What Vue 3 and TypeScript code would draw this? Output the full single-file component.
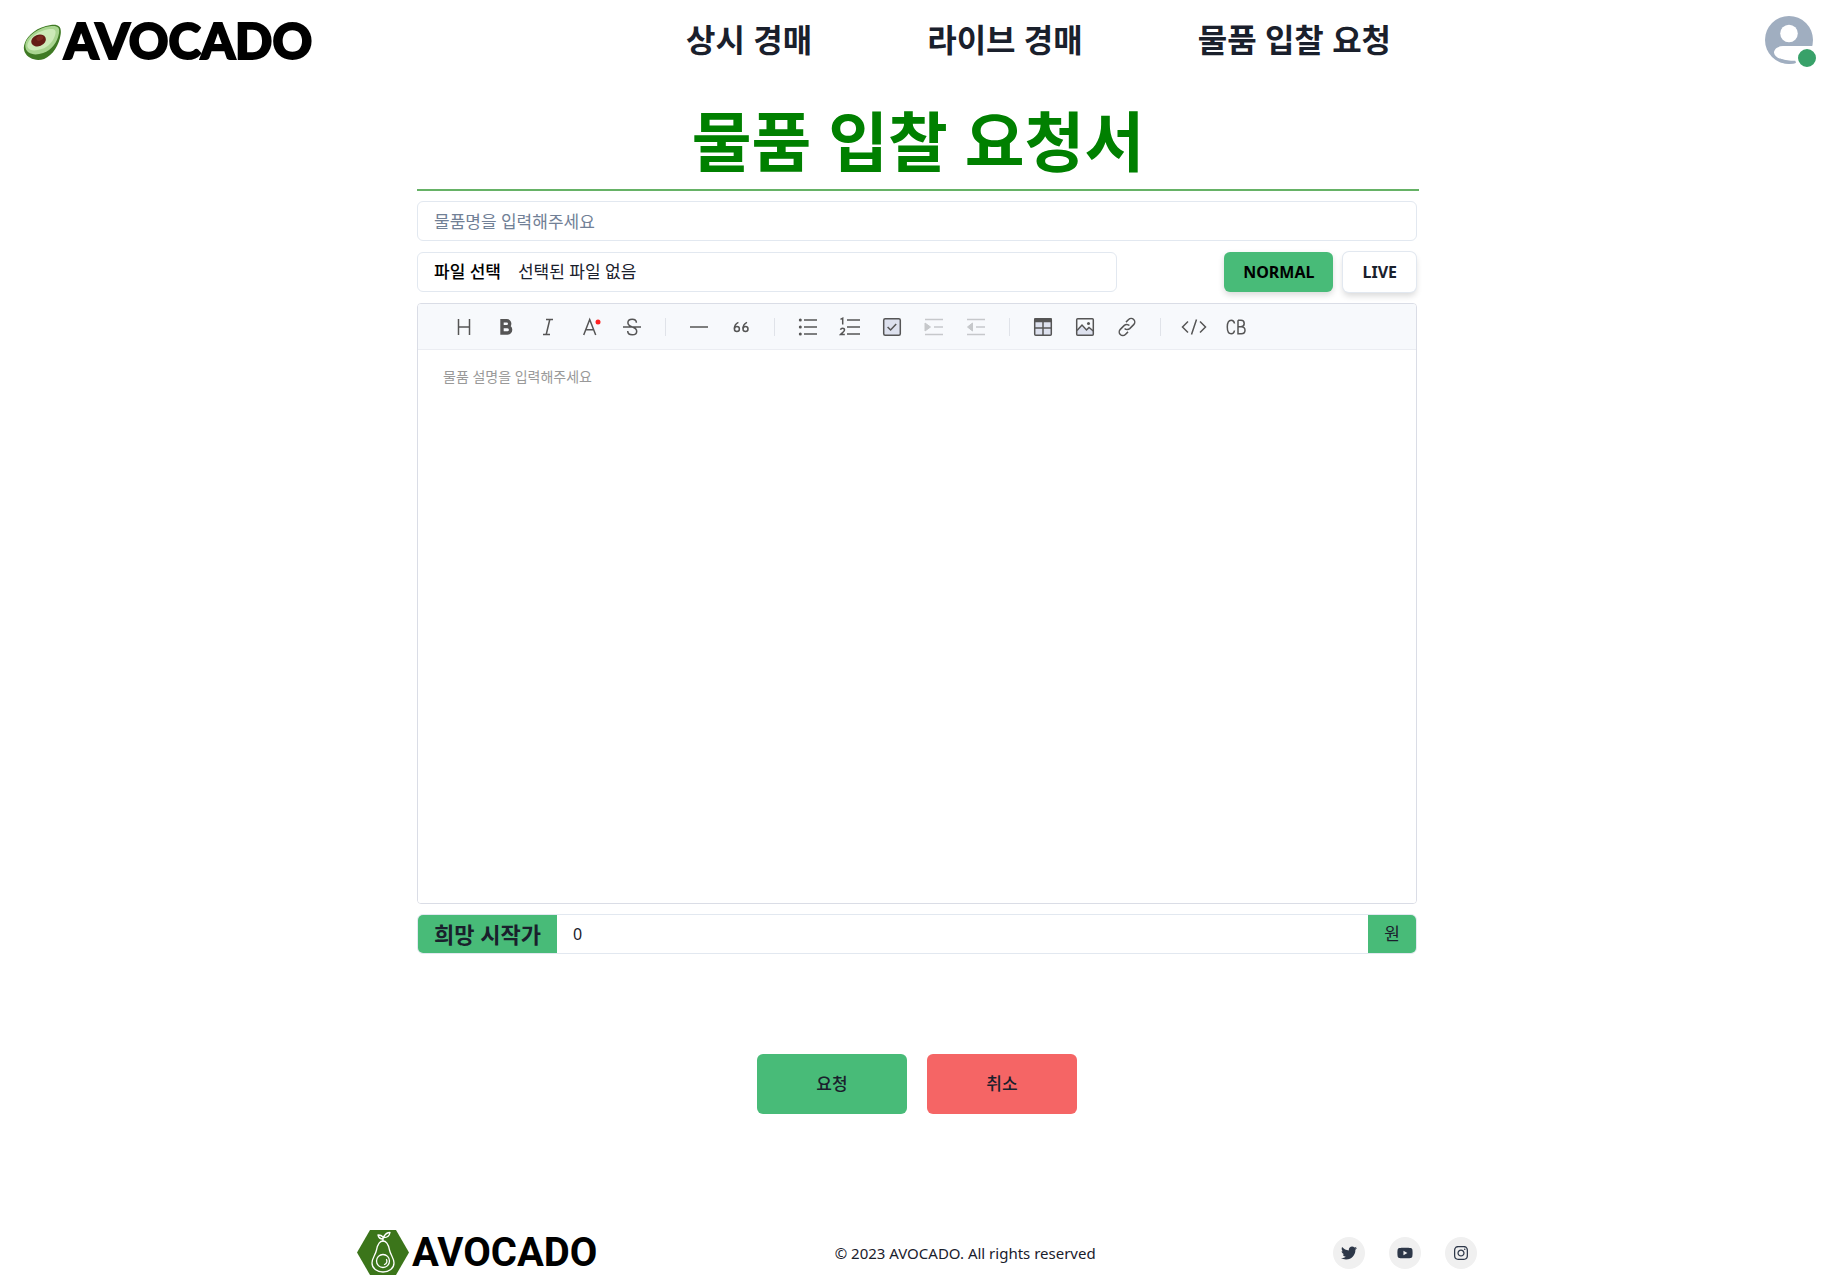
<script setup lang="ts">
import { ref } from 'vue'

type Mode = 'NORMAL' | 'LIVE'

const navItems: string[] = ['상시 경매', '라이브 경매', '물품 입찰 요청']
const modes: Mode[] = ['NORMAL', 'LIVE']

const mode = ref<Mode>('NORMAL')
const itemName = ref('')
const description = ref('')
const price = ref('0')
const fileName = ref('선택된 파일 없음')

function onFile(event: Event): void {
  const files = (event.target as HTMLInputElement).files
  fileName.value = files && files.length ? files[0].name : '선택된 파일 없음'
}

interface Tool {
  label: string
  svg: string
  disabled?: boolean
}

const toolGroups: Tool[][] = [
  [
    { label: 'Headings', svg: '<path d="M10.5 8v16M21.5 8v16M10.5 16h11"/>' },
    { label: 'Bold', svg: '<path d="M12 9.8h4.8a2.9 2.9 0 0 1 0 5.8H12zM12 15.6h5.4a3.2 3.2 0 0 1 0 6.4H12z" stroke-width="3.4"/>' },
    { label: 'Italic', svg: '<path d="M14 8.5h7M11 23.5h7M17.8 8.5l-3.6 15"/>' },
    { label: 'Text color', svg: '<path d="M9.7 24l6-15.5 6 15.5M11.8 18.8h7.8"/><circle cx="24" cy="11" r="2.5" fill="#f22" stroke="none"/>' },
    { label: 'Strike', svg: '<path d="M7 16h18M20.4 11.8c0-2.2-1.8-3.6-4.2-3.6s-4.3 1.4-4.3 3.6c0 2.6 2.2 3.4 4.4 4.2 2.4.8 4.4 1.6 4.4 4.2 0 2.2-2 3.6-4.4 3.6-2.6 0-4.6-1.4-4.6-3.8"/>' },
  ],
  [
    { label: 'Line', svg: '<path d="M7 16h18"/>' },
    { label: 'Blockquote', svg: '<path d="M13.4 11.4c-2.2 1-4 3.6-4 6.2M22 11.4c-2.2 1-4 3.6-4 6.2"/><circle cx="11.9" cy="18" r="2.5"/><circle cx="20.5" cy="18" r="2.5"/>' },
  ],
  [
    { label: 'Unordered list', svg: '<path d="M12 9h13M12 16h13M12 23h13"/><g fill="currentColor" stroke="none"><circle cx="8.3" cy="9" r="1.5"/><circle cx="8.3" cy="16" r="1.5"/><circle cx="8.3" cy="23" r="1.5"/></g>' },
    { label: 'Ordered list', svg: '<path d="M13 9h13M13 16h13M13 23h13M6.5 8.4l2.2-1.2v6.3M6.5 18.8c.3-1.1 1.1-1.6 2-1.6 1.2 0 2 .7 2 1.7 0 1.6-2.4 2.8-4 4.6h4.3"/>' },
    { label: 'Task', svg: '<rect x="7.7" y="7.7" width="16.6" height="16.6" rx="1.5" fill="#dde1ee"/><path d="M11.6 16l3 3 5.6-6"/>' },
    { label: 'Indent', disabled: true, svg: '<path d="M7 8.5h18M16 16h9M7 23.5h18"/><path d="M7 12l5.5 4L7 20z" fill="currentColor" stroke-width="1"/>' },
    { label: 'Outdent', disabled: true, svg: '<path d="M7 8.5h18M16 16h9M7 23.5h18"/><path d="M12.5 12l-5 4 5 4z" fill="currentColor" stroke-width="1"/>' },
  ],
  [
    { label: 'Insert table', svg: '<rect x="7.7" y="7.7" width="16.6" height="16.6" rx="1" fill="#dde1ee"/><path d="M8 8h16v2.500H8z" fill="currentColor"/><path d="M16 11v13M8 17h16"/>' },
    { label: 'Insert image', svg: '<path d="M8 20l5-5.5 3.5 4 3-2.5 4.5 4v4H8z" fill="#dde1ee" stroke="none"/><rect x="7.7" y="7.7" width="16.6" height="16.6" rx="1"/><path d="M8 19.5l5-5.5 4.5 5 2.5-2.5 4.3 3.5"/><circle cx="19.5" cy="12.5" r="1.5" fill="currentColor" stroke="none"/>' },
    { label: 'Insert link', svg: '<path d="M13.6 17.4a3.6 3.6 0 0 0 5.1.2l4-4a3.6 3.6 0 0 0-5.1-5.1l-2.6 2.6M18.4 14.6a3.6 3.6 0 0 0-5.1-.2l-4 4a3.6 3.6 0 0 0 5.1 5.1l2.600-2.600"/>' },
  ],
  [
    { label: 'Code', svg: '<path d="M10 10.5L4.5 16l5.5 5.5M22 10.5l5.5 5.5-5.5 5.5M18.5 8.5l-5 15"/>' },
    { label: 'Insert code block', svg: '<path d="M14.5 12.5c-.3-2-1.5-3.300-3.300-3.300-2.400 0-3.900 2.400-3.900 6.800s1.500 6.800 3.900 6.800c1.800 0 3-1.300 3.300-3.300M18 9.300v13.400h3.400c2.300 0 3.600-1.400 3.600-3.500S23.700 15.700 21.400 15.700H18M18 9.300h3c2 0 3.200 1.200 3.200 3.200s-1.200 3.200-3.200 3.200"/>' },
  ],
]

interface Social {
  label: string
  box: string
  path: string
}

const socials: Social[] = [
  {
    label: 'Twitter',
    box: '0 0 512 512',
    path: 'M459.370 151.716c.325 4.548.325 9.097.325 13.645 0 138.720-105.583 298.558-298.558 298.558-59.452 0-114.680-17.219-161.137-47.106 8.447.974 16.568 1.299 25.340 1.299 49.055 0 94.213-16.568 130.274-44.832-46.132-.975-84.792-31.188-98.112-72.772 6.498.974 12.995 1.624 19.818 1.624 9.421 0 18.843-1.300 27.614-3.573-48.081-9.747-84.143-51.980-84.143-102.985v-1.299c13.969 7.797 30.214 12.670 47.431 13.319-28.264-18.843-46.781-51.005-46.781-87.391 0-19.492 5.197-37.360 14.294-52.954 51.655 63.675 129.300 105.258 216.365 109.807-1.624-7.797-2.599-15.918-2.599-24.040 0-57.828 46.782-104.934 104.934-104.934 30.213 0 57.502 12.670 76.670 33.137 23.715-4.548 46.456-13.320 66.599-25.340-7.798 24.366-24.366 44.833-46.132 57.827 21.117-2.273 41.584-8.122 60.426-16.243-14.292 20.791-32.161 39.308-52.628 54.253z',
  },
  {
    label: 'YouTube',
    box: '0 0 576 512',
    path: 'M549.655 124.083c-6.281-23.650-24.787-42.276-48.284-48.597C458.781 64 288 64 288 64S117.220 64 74.629 75.486c-23.497 6.322-42.003 24.947-48.284 48.597-11.412 42.867-11.412 132.305-11.412 132.305s0 89.438 11.412 132.305c6.281 23.650 24.787 41.500 48.284 47.821C117.220 448 288 448 288 448s170.780 0 213.371-11.486c23.497-6.321 42.003-24.171 48.284-47.821 11.412-42.867 11.412-132.305 11.412-132.305s0-89.438-11.412-132.305zm-317.510 213.508V175.185l142.739 81.205-142.739 81.201z',
  },
  {
    label: 'Instagram',
    box: '0 0 448 512',
    path: 'M224.100 141c-63.600 0-114.900 51.300-114.900 114.900s51.300 114.900 114.900 114.900S339 319.500 339 255.900 287.700 141 224.100 141zm0 189.600c-41.100 0-74.700-33.500-74.700-74.700s33.500-74.700 74.700-74.700 74.700 33.500 74.700 74.700-33.600 74.700-74.700 74.700zm146.400-194.300c0 14.900-12 26.800-26.800 26.800-14.900 0-26.800-12-26.800-26.800s12-26.800 26.800-26.800 26.800 12 26.800 26.800zm76.100 27.200c-1.700-35.900-9.900-67.700-36.200-93.900-26.200-26.200-58-34.400-93.900-36.200-37-2.100-147.900-2.100-184.900 0-35.800 1.700-67.600 9.900-93.900 36.100s-34.400 58-36.200 93.900c-2.100 37-2.100 147.900 0 184.900 1.700 35.900 9.900 67.700 36.200 93.900s58 34.400 93.900 36.200c37 2.100 147.900 2.100 184.900 0 35.900-1.700 67.700-9.900 93.900-36.200 26.200-26.200 34.400-58 36.200-93.900 2.100-37 2.100-147.800 0-184.800zM398.800 388c-7.800 19.600-22.900 34.700-42.600 42.600-29.500 11.700-99.500 9-132.100 9s-102.700 2.600-132.100-9c-19.600-7.800-34.700-22.900-42.600-42.600-11.700-29.500-9-99.500-9-132.100s-2.600-102.700 9-132.100c7.800-19.600 22.900-34.700 42.600-42.600 29.500-11.700 99.500-9 132.100-9s102.700-2.600 132.100 9c19.600 7.800 34.700 22.900 42.600 42.600 11.700 29.500 9 99.500 9 132.100s2.700 102.700-9 132.100z',
  },
]
</script>

<template>
  <div class="page">
    <header class="header">
      <a class="brand" href="#">
        <svg class="brand-mark" viewBox="68 70 118 112" aria-hidden="true">
          <path d="M74 126C82 104 112 78 152 73c24-3 33 5 30 28-4 32-24 64-50 75-24 7-49 0-59-21-4-10-3-19 1-29z" fill="#3f7a24" />
          <path d="M77 124c9-20 37-42 72-47 22-3 31 2 28 20-4 27-22 52-48 61-21 7-42 6-51-9-4-8-4-17-1-25z" fill="#a9d590" />
          <path d="M84 125c8-17 32-34 60-39 18-3 25 1 22 14-5 21-20 39-42 46-18 6-35 6-41-4-3-5-2-11 1-17z" fill="#cdeab8" />
          <ellipse cx="115" cy="120" rx="23" ry="17" transform="rotate(-22 115 120)" fill="#641c14" />
          <ellipse cx="119" cy="113" rx="11" ry="7" transform="rotate(-22 119 113)" fill="#7c2a20" />
        </svg>
        <span class="brand-name">AVOCADO</span>
      </a>
      <nav class="nav">
        <a v-for="item in navItems" :key="item" href="#">{{ item }}</a>
      </nav>
      <button class="avatar" type="button" aria-label="프로필">
        <svg viewBox="0 0 48 48" aria-hidden="true">
          <circle cx="24" cy="24" r="24" fill="#a0aec0" />
          <circle cx="24" cy="17.5" r="8.8" fill="#fff" />
          <path d="M18 30h30v15H27C17 45 9 41 9 36.5 9 33 13 30 18 30z" fill="#fff" />
          <path d="M15 42.500c5 1.800 10 2.500 16 2.300v2.200q-8 2-16-1z" fill="#a0aec0" />
        </svg>
        <span class="badge"></span>
      </button>
    </header>

    <main class="main">
      <form class="form" @submit.prevent>
        <h1 class="title">물품 입찰 요청서</h1>

        <input v-model="itemName" class="field" type="text" aria-label="물품명" placeholder="물품명을 입력해주세요" />

        <div class="row">
          <label class="field file">
            <input class="file-input" type="file" @change="onFile" />
            <span class="file-button">파일 선택</span>
            <span>{{ fileName }}</span>
          </label>
          <div class="modes">
            <button
              v-for="m in modes"
              :key="m"
              type="button"
              class="mode"
              :class="{ active: mode === m }"
              @click="mode = m"
            >{{ m }}</button>
          </div>
        </div>

        <section class="editor">
          <div class="toolbar">
            <div v-for="(group, i) in toolGroups" :key="i" class="tool-group">
              <button
                v-for="tool in group"
                :key="tool.label"
                type="button"
                class="tool"
                :disabled="tool.disabled"
                :aria-label="tool.label"
              >
                <svg viewBox="0 0 32 32" aria-hidden="true" v-html="tool.svg"></svg>
              </button>
            </div>
          </div>
          <textarea v-model="description" class="editor-text" aria-label="물품 설명" placeholder="물품 설명을 입력해주세요"></textarea>
        </section>

        <div class="price">
          <label class="price-label" for="price">희망 시작가</label>
          <input id="price" v-model="price" class="price-input" type="text" inputmode="numeric" />
          <span class="price-unit">원</span>
        </div>

        <div class="actions">
          <button class="action submit" type="submit">요청</button>
          <button class="action cancel" type="button">취소</button>
        </div>
      </form>
    </main>

    <footer class="footer">
      <a class="foot-brand" href="#">
        <svg class="foot-mark" viewBox="0 0 52 45" aria-hidden="true">
          <path d="M13 0h26l13 22.5L39 45H13L0 22.5z" fill="#3b751a" />
          <g fill="none" stroke="#fff" stroke-width="1.3" stroke-linecap="round" stroke-linejoin="round">
            <path d="M26 11c-4 0-5.5 4-6.500 9s-4.500 8-4.500 13c0 5.500 5 9 11 9s11-3.500 11-9c0-5-3.500-8-4.500-13S30 11 26 11z" />
            <circle cx="26" cy="31" r="6.5" />
            <path d="M29.5 29.5a3.5 3.5 0 0 1-2 5" />
            <path d="M26 11c-.5-2 .5-4.500 2-6M27 6.500c2-4 4-4 6-4-.5 3-2.500 5-6 5M26 9c-2.500 0-4.500-1.500-5-4 2.500 0 4.500 1 5.500 3" />
          </g>
        </svg>
        <span class="foot-name">AVOCADO</span>
      </a>
      <p class="copyright">© 2023 AVOCADO. All rights reserved</p>
      <div class="socials">
        <a v-for="s in socials" :key="s.label" class="social" href="#" :aria-label="s.label">
          <svg :viewBox="s.box" aria-hidden="true"><path :d="s.path" fill="currentColor" /></svg>
        </a>
      </div>
    </footer>
  </div>
</template>

<style>
body {
  background: #fff;
}
</style>

<style scoped>
.page,
.page * {
  box-sizing: border-box;
}
.page {
  font-family: "Noto Sans", "Noto Sans CJK KR", sans-serif;
  font-size: 17px;
  line-height: 24px;
  color: #1a202c;
}
button,
input,
textarea {
  font: inherit;
  color: inherit;
  margin: 0;
}
a {
  color: inherit;
  text-decoration: none;
}

.header {
  display: flex;
  align-items: center;
  justify-content: space-between;
  height: 80px;
  padding: 0 9px 0 23px;
}
.brand {
  display: flex;
  align-items: center;
  gap: 2px;
}
.brand-mark {
  width: 39px;
  height: 37px;
  margin-top: 4px;
}
.brand-name {
  font-family: Lato, Roboto, sans-serif;
  font-size: 49px;
  font-weight: 900;
  line-height: 80px;
  color: #000;
  -webkit-text-stroke: 2px #000;
}
.nav {
  display: flex;
  gap: 115px;
  font-size: 32px;
  font-weight: 600;
  line-height: 48px;
}
.avatar {
  position: relative;
  width: 48px;
  height: 48px;
  padding: 0;
  border: 0;
  background: none;
}
.avatar svg {
  display: block;
  width: 48px;
  height: 48px;
}
.badge {
  position: absolute;
  right: -6px;
  bottom: -6px;
  width: 24px;
  height: 24px;
  border: 3px solid #fff;
  border-radius: 50%;
  background: #38a169;
}

.main {
  padding-left: 12px;
}
.form {
  width: 100%;
  max-width: 1000px;
  margin: 0 auto;
}
.title {
  margin: 0 -2px 10px 0;
  padding-top: 13px;
  border-bottom: 2px solid #66b266;
  font-size: 65px;
  font-weight: 600;
  line-height: 96px;
  text-align: center;
  color: #008000;
}
.field {
  display: block;
  width: 100%;
  height: 40px;
  padding: 0 16px;
  border: 1px solid #e2e8f0;
  border-radius: 6px;
  background: #fff;
}
.field::placeholder {
  color: #718096;
  opacity: 1;
}
.row {
  display: flex;
  justify-content: space-between;
  margin: 11px 0;
}
.file {
  display: flex;
  align-items: center;
  gap: 17px;
  width: 70%;
}
.file-input {
  position: absolute;
  width: 1px;
  height: 1px;
  opacity: 0;
}
.file-button {
  font-weight: 500;
  color: #000;
}
.modes {
  display: flex;
  gap: 10px;
  padding-right: 1px;
}
.mode {
  height: 40px;
  padding: 0 19px;
  border: 0;
  border-radius: 6px;
  background: #fff;
  box-shadow: 0 0 0 1px #e2e8f0, 0 4px 6px rgba(0, 0, 0, 0.15);
  font-size: 16px;
  font-weight: 700;
}
.mode.active {
  background: #48bb78;
  box-shadow: 0 3px 6px rgba(0, 0, 0, 0.15);
  color: #000;
}

.editor {
  border: 1px solid #dadde6;
  border-radius: 4px;
  overflow: hidden;
}
.toolbar {
  display: flex;
  align-items: center;
  height: 46px;
  padding: 0 25px;
  border-bottom: 1px solid #ebedf2;
  background: #f7f9fc;
}
.tool-group {
  display: flex;
}
.tool-group + .tool-group {
  margin-left: 12px;
  padding-left: 13px;
  background: linear-gradient(#e0e3e9, #e0e3e9) left center / 1px 18px no-repeat;
}
.tool {
  width: 32px;
  height: 32px;
  margin: 0 5px;
  padding: 0;
  border: 0;
  background: none;
  color: #555;
}
.tool:disabled {
  color: #c6c8cb;
}
.tool svg {
  display: block;
  width: 32px;
  height: 32px;
  fill: none;
  stroke: currentColor;
  stroke-width: 1.5;
}
.editor-text {
  display: block;
  width: 100%;
  height: 553px;
  padding: 15px 25px;
  border: 0;
  outline: 0;
  resize: none;
  font-size: 14px;
}
.editor-text::placeholder {
  color: #999;
  opacity: 1;
}

.price {
  display: flex;
  height: 40px;
  margin-top: 10px;
  border: 1px solid #e2e8f0;
  border-radius: 6px;
  overflow: hidden;
  line-height: 38px;
}
.price-label {
  padding: 0 16px;
  background: #48bb78;
  font-size: 22px;
  font-weight: 600;
}
.price-input {
  flex: 1;
  min-width: 0;
  padding: 0 16px;
  border: 0;
  font-size: 16px;
}
.price-unit {
  padding: 0 16px;
  background: #48bb78;
  font-size: 17px;
}

.actions {
  display: flex;
  justify-content: center;
  gap: 20px;
  margin-top: 100px;
}
.action {
  width: 150px;
  height: 60px;
  border: 0;
  border-radius: 6px;
  font-weight: 500;
}
.submit {
  background: #48bb78;
}
.cancel {
  background: #f56565;
}

.footer {
  display: flex;
  align-items: center;
  justify-content: space-between;
  max-width: 1132px;
  margin: 100px auto 0;
  padding: 16px 0 10px 12px;
}
.foot-brand {
  display: flex;
  align-items: center;
  gap: 3px;
}
.foot-mark {
  width: 52px;
  height: 45px;
}
.foot-name {
  font-family: Roboto, sans-serif;
  font-size: 40px;
  font-weight: 700;
  line-height: 45px;
  color: #000;
}
.copyright {
  margin: 0;
  font-size: 15px;
}
.socials {
  display: flex;
  gap: 24px;
}
.social {
  display: flex;
  align-items: center;
  justify-content: center;
  width: 32px;
  height: 32px;
  border-radius: 50%;
  background: #f0f0f0;
  color: #2d3748;
}
.social svg {
  width: 16px;
  height: 16px;
}
</style>
